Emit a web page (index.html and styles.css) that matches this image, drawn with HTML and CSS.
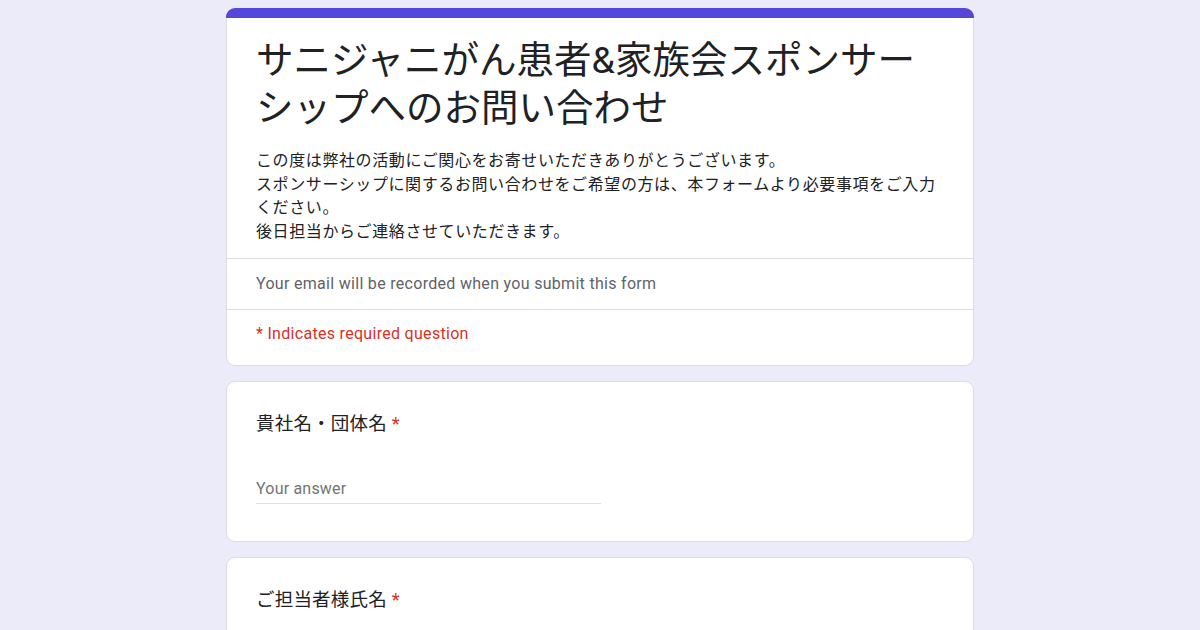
FILE: index.html
```html
<!DOCTYPE html>
<html lang="ja">
<head>
<meta charset="utf-8">
<title>サニジャニがん患者&amp;家族会スポンサーシップへのお問い合わせ</title>
<link rel="stylesheet" href="styles.css">
</head>
<body>
<main class="page">
  <section class="card header-card">
    <div class="accent-bar"></div>
    <div class="header-body">
      <h1 class="form-title">サニジャニがん患者&amp;家族会スポンサーシップへのお問い合わせ</h1>
      <div class="form-desc">この度は弊社の活動にご関心をお寄せいただきありがとうございます。<br>スポンサーシップに関するお問い合わせをご希望の方は、本フォームより必要事項をご入力ください。<br>後日担当からご連絡させていただきます。</div>
    </div>
    <div class="info-row email-note">Your email will be recorded when you submit this form</div>
    <div class="info-row required-note">* Indicates required question</div>
  </section>

  <section class="card question-card">
    <div class="q-label">貴社名・団体名 <span class="star">*</span></div>
    <div class="answer">Your answer</div>
  </section>

  <section class="card question-card">
    <div class="q-label">ご担当者様氏名 <span class="star">*</span></div>
    <div class="answer">Your answer</div>
  </section>
</main>
</body>
</html>
```

FILE: styles.css
```css
html, body {
  margin: 0;
  padding: 0;
}
body {
  background: #ecebf9;
  font-family: Roboto, "Noto Sans CJK JP", sans-serif;
  color: #202124;
  height: 630px;
  overflow: hidden;
}
.page {
  width: 748px;
  margin: 0 auto;
  padding-top: 8px;
}
.card {
  background: #fff;
  border: 1px solid #dadce0;
  border-radius: 9px;
  margin-bottom: 15px;
}
.header-card {
  border-top: none;
}
.accent-bar {
  height: 10px;
  background: #5546dc;
  border-radius: 9px 9px 0 0;
  margin: 0 -1px;
}
.header-body {
  padding: 18px 29px 14px;
}
.form-title {
  margin: 0;
  font-size: 37.5px;
  font-weight: 400;
  line-height: 48px;
  color: #202124;
}
.form-desc {
  margin-top: 17px;
  font-size: 16px;
  line-height: 23.7px;
  letter-spacing: 0.6px;
  color: #202124;
}
.info-row {
  border-top: 1px solid #dadce0;
  padding: 14px 29px;
  font-size: 16px;
  line-height: 22px;
  letter-spacing: 0.3px;
}
.email-note {
  color: #5f6368;
}
.required-note {
  padding: 13px 29px 20px;
  color: #d93025;
}
.question-card {
  padding: 30px 29px 37px;
}
.q-label {
  font-size: 18.5px;
  line-height: 24px;
  letter-spacing: 0.2px;
  color: #202124;
}
.star {
  color: #d93025;
}
.answer {
  margin-top: 41px;
  width: 345px;
  font-size: 16px;
  line-height: 24px;
  letter-spacing: 0.2px;
  color: #70757a;
  padding-bottom: 2px;
  border-bottom: 1px solid #e0e0e0;
}
```
